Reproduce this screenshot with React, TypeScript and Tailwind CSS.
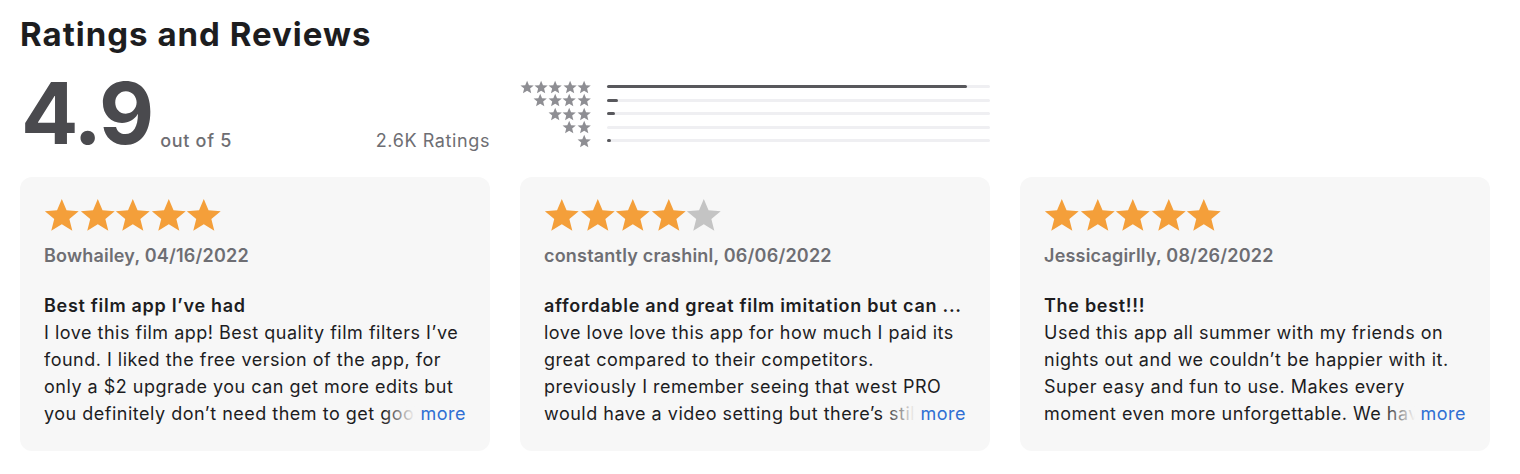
import type { ReactNode } from "react";

interface Review {
  stars: number;
  author: string;
  date: string;
  title: string;
  body: string;
}

const reviews: Review[] = [
  {
    stars: 5,
    author: "Bowhailey",
    date: "04/16/2022",
    title: "Best film app I’ve had",
    body: "I love this film app! Best quality film filters I’ve found. I liked the free version of the app, for only a $2 upgrade you can get more edits but you definitely don’t need them to get good results, it is already amazing as is.",
  },
  {
    stars: 4,
    author: "constantly crashinl",
    date: "06/06/2022",
    title: "affordable and great film imitation but can ...",
    body: "love love love this app for how much I paid its great compared to their competitors. previously I remember seeing that west PRO would have a video setting but there’s still nothing about it anywhere in the app.",
  },
  {
    stars: 5,
    author: "Jessicagirlly",
    date: "08/26/2022",
    title: "The best!!!",
    body: "Used this app all summer with my friends on nights out and we couldn’t be happier with it. Super easy and fun to use. Makes every moment even more unforgettable. We have already recommended it to everyone.",
  },
];

// 各星级占比（%）
const histogram = [94, 3, 2, 0, 1];

function Star({ className }: { className: string }) {
  return (
    <svg viewBox="0 0 24 24" className={className} fill="currentColor">
      <path d="M12 1.2l3.2 7.6 8.2.6-6.3 5.3 2 8-7.1-4.4-7.1 4.4 2-8L.6 9.4l8.2-.6z" />
    </svg>
  );
}

function Card({ children }: { children: ReactNode }) {
  return <div className="relative h-[274px] rounded-xl bg-[#f7f7f7] px-6 pt-5">{children}</div>;
}

export default function App() {
  return (
    <div className="min-h-[474px] bg-white px-5 pt-3 font-['Inter',sans-serif] text-[#1d1d1f]">
      <h2 className="text-[33px] leading-[44px] font-bold tracking-[1px]">Ratings and Reviews</h2>

      <div className="mt-3 grid grid-cols-[470px_470px] gap-[30px]">
        {/* 总评分 */}
        <div className="flex h-[92px] items-end">
          <span className="ml-[1px] text-[85px] leading-[92px] font-bold tracking-[-2px] text-[#4a4a4e]">4.9</span>
          <span className="mb-[9px] ml-2 text-[18px] leading-5 font-medium tracking-[0.7px] text-[#6e6e73]">
            out of 5
          </span>
          <span className="mb-[9px] ml-auto text-[18px] leading-5 tracking-[0.6px] text-[#6e6e73]">2.6K Ratings</span>
        </div>

        {/* 星级分布 */}
        <div className="flex flex-col pt-3">
          {histogram.map((pct, i) => (
            <div key={i} className="flex h-[13.5px] items-center gap-4">
              <div className="flex w-[71px] justify-end">
                {Array.from({ length: 5 - i }).map((_, j) => (
                  <Star key={j} className="h-[14px] w-[14.4px] text-[#8e8e93]" />
                ))}
              </div>
              <div className="h-[3px] flex-1 rounded-full bg-[#efeff2]">
                <div className="h-full rounded-full bg-[#58585c]" style={{ width: `${pct}%` }} />
              </div>
            </div>
          ))}
        </div>
      </div>

      <div className="mt-[17px] grid grid-cols-[470px_470px_470px] gap-[30px]">
        {reviews.map((r) => (
          <Card key={r.author}>
            <div className="flex">
              {Array.from({ length: 5 }).map((_, j) => (
                <Star
                  key={j}
                  className={"h-[36px] w-[35.6px] " + (j < r.stars ? "text-[#f49f3a]" : "text-[#c4c4c4]")}
                />
              ))}
            </div>
            <div className="mt-[11px] text-[18px] leading-6 font-semibold tracking-[0.2px] text-[#6e6e73]">
              {r.author}, {r.date}
            </div>
            <div className="mt-6 truncate text-[18px] leading-[27px] font-semibold tracking-[0.7px]">{r.title}</div>
            <div className="relative tracking-[0.5px]">
              <p className="line-clamp-4 text-[18px] leading-[27px]">{r.body}</p>
              <span className="absolute right-0 bottom-0 flex items-center bg-[#f7f7f7] pl-[5px] text-[18px] leading-[27px] text-[#2f6fd3]">
                <span className="absolute top-0 right-full h-full w-8 bg-gradient-to-r from-[#f7f7f7]/0 to-[#f7f7f7]" />
                more
              </span>
            </div>
          </Card>
        ))}
      </div>
    </div>
  );
}
